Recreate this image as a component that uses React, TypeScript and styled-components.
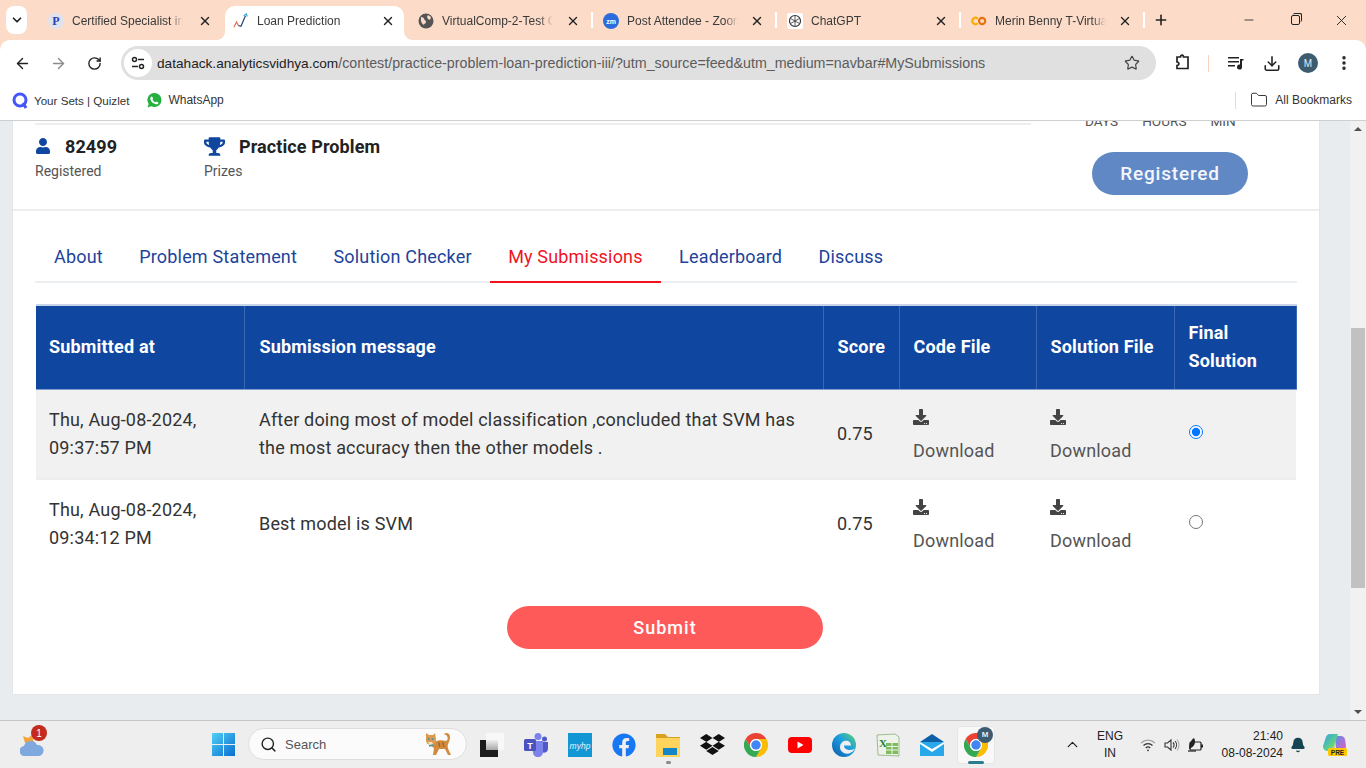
import React from "react";
import styled, { createGlobalStyle } from "styled-components";
import { ArrowLeft, ArrowRight, RotateCw, Star, MoreVertical, X, Plus, Minus, Folder, ChevronDown, ChevronUp, Search, Bell, Download } from "lucide-react";
import { FaUser, FaTrophy, FaDownload, FaFacebook, FaDropbox } from "react-icons/fa";

const Global = createGlobalStyle`
  html, body { margin: 0; padding: 0; width: 1366px; height: 768px; overflow: hidden; background: #fff; }
  * { box-sizing: border-box; }
`;
const ui = `"Liberation Sans", Arial, sans-serif`;
const rb = `Roboto, "Liberation Sans", sans-serif`;

const Shell = styled.div`width:1366px;height:768px;display:flex;flex-direction:column;overflow:hidden;font-family:${ui};background:#fcdcc8;`;
const TabStrip = styled.div`height:40px;background:#fcdcc8;display:flex;align-items:stretch;flex:none;`;
const TabMenu = styled.div`width:21px;height:28px;margin:6px 13px 0 6px;background:#fff;border-radius:8px;display:flex;align-items:center;justify-content:center;color:#222;`;
const Tab = styled.div<{ $active?: boolean; $sep?: boolean; $pad: number }>`
  position:relative;width:184px;flex:none;display:flex;align-items:center;font-size:12px;color:#333;padding:1px 12px 0 ${p => p.$pad}px;
  ${p => p.$active ? `background:#fff;border-radius:10px 10px 0 0;margin:6px 4px 0 1px;width:179px;padding-right:9px;padding-bottom:6px;
    &::before,&::after{content:"";position:absolute;bottom:0;width:8px;height:8px;}
    &::before{left:-8px;background:radial-gradient(circle at 0 0,transparent 7.5px,#fff 8px);}
    &::after{right:-8px;background:radial-gradient(circle at 100% 0,transparent 7.5px,#fff 8px);}` : ""}
  ${p => p.$sep ? `&::after{content:"";position:absolute;right:-1px;top:12px;width:2px;height:16px;background:#fff;}` : ""}
`;
const TabIcon = styled.span`width:16px;height:16px;flex:none;display:flex;align-items:center;justify-content:center;margin-left:1px;`;
const TabTitle = styled.span`flex:none;width:111px;margin-left:8px;white-space:nowrap;overflow:hidden;-webkit-mask-image:linear-gradient(90deg,#000 88%,transparent);mask-image:linear-gradient(90deg,#000 88%,transparent);color:#3a3a3a;`;
const TabClose = styled.span`margin-left:auto;display:flex;color:#222;`;
const NewTab = styled.span`display:flex;align-items:center;margin-left:9px;color:#222;`;
const WinCtl = styled.div`margin-left:auto;padding-right:2px;display:flex;align-items:center;color:#222;`;
const WinBtn = styled.span`width:46px;display:flex;justify-content:center;`;
const RestoreBox = styled.span`position:relative;width:9px;height:10px;border:1px solid #222;border-radius:2px;display:block;&::after{content:"";position:absolute;left:1px;top:-3px;width:8px;height:8px;border-top:1px solid #222;border-right:1px solid #222;border-radius:2px;}`;

const Toolbar = styled.div`height:44px;padding-top:2px;background:#fff;display:flex;align-items:center;flex:none;border-radius:10px 10px 0 0;`;
const NavIcon = styled.span<{ $w?: number; $dim?: boolean }>`width:${p => p.$w ?? 36}px;display:flex;justify-content:center;flex:none;color:${p => p.$dim ? "#8d8d8d" : "#222"};`;
const Omnibox = styled.div`width:1035px;height:34px;background:#e0e0e0;border-radius:17px;margin-left:5px;display:flex;align-items:center;padding:0 16px 0 3px;font-size:14.28px;color:#5c5c5c;`;
const SiteChip = styled.span`width:28px;height:28px;background:#fff;border-radius:50%;display:flex;align-items:center;justify-content:center;color:#222;margin-right:5px;flex:none;`;
const Host = styled.span`color:#222;font-size:13.65px;`;
const Url = styled.span`flex:1;white-space:nowrap;`;
const ToolSep = styled.span`width:1px;height:17px;background:#f8d4be;flex:none;`;
const Avatar = styled.span`width:20px;height:20px;border-radius:50%;background:#3e5c70;color:#e6edf2;font-size:10px;display:flex;align-items:center;justify-content:center;`;

const Bookmarks = styled.div`height:37px;background:#fff;border-bottom:1px solid #cfcfcf;flex:none;display:flex;align-items:center;font-size:11.6px;color:#333;padding:0 14px 4px 12px;`;
const Bookmark = styled.span`display:flex;align-items:center;gap:5px;margin-right:18px;&:nth-child(2){gap:6px;font-size:12px;}`;
const BmRight = styled.span`margin-left:auto;display:flex;align-items:center;gap:7px;font-size:12px;`;
const BmFolder = styled.span`display:flex;margin-left:7px;color:#333;`;

const PageArea = styled.div`flex:1;min-height:0;display:flex;background:#e9ecef;`;
const Main = styled.div`flex:1;padding:0 30px 0 12px;overflow:hidden;`;
const Card = styled.div`background:#fff;height:574px;border:1px solid #e4e6e8;border-top:0;overflow:hidden;`;
const Head = styled.div`height:90px;display:flex;border-bottom:2px solid #eee;padding:0 0 0 22px;`;
const HeadLeft = styled.div`width:996px;flex:none;padding-top:2px;`;
const Rule = styled.div`height:2px;background:#eee;`;
const Stats = styled.div`display:flex;margin-top:11px;`;
const Stat = styled.div`width:169px;font-family:${rb};`;
const StatTop = styled.div`display:flex;align-items:center;height:20px;color:#222;font-size:18px;font-weight:700;white-space:nowrap;letter-spacing:.1px;`;
const StatIcon = styled.span`color:#0f469f;display:flex;margin-right:14px;`;
const StatLabel = styled.div`font-size:14px;color:#555;margin-top:6px;line-height:18px;`;
const HeadRight = styled.div`flex:1;font-family:${rb};display:flex;flex-direction:column;align-items:flex-start;`;
const Counter = styled.div`display:flex;margin:-8px 0 0 54px;font-size:13.6px;color:#555;gap:24px;line-height:16px;height:16px;`;
const Registered = styled.div`width:156px;height:43px;margin:23px 0 0 61px;border-radius:22px;background:#6088c4;color:#f4f6fb;font-size:19px;font-weight:500;letter-spacing:.8px;display:flex;align-items:center;justify-content:center;`;

const Body = styled.div`padding:0 22px;font-family:${rb};`;
const Nav = styled.div`display:flex;gap:.4px;height:72px;padding:27px 0 0 1px;border-bottom:2px solid #eceff1;align-items:stretch;`;
const NavItem = styled.div<{ $active?: boolean }>`padding:0 18px;font-size:18px;letter-spacing:.18px;line-height:38px;height:45px;white-space:nowrap;color:${p => p.$active ? "#f0141e" : "#1d439b"};border-bottom:${p => p.$active ? "2px solid #f0141e" : "0"};`;
const Table = styled.table`margin:21px 0 0 1px;width:1260px;border-collapse:collapse;table-layout:fixed;font-size:18px;letter-spacing:.18px;color:#333;`;
const Th = styled.th<{ $w: number }>`width:${p => p.$w}px;height:84px;background:#0f469f;color:#fff;font-weight:700;text-align:left;padding:0 13px 0 14px;line-height:28px;border:1px solid #6d90c8;border-left-color:#3b68b3;border-right-color:#3b68b3;border-top:2px solid #c8d4e8;border-bottom:1px solid #7f9dcd;&:first-child{border-left:0;padding-left:13px;}&:nth-child(2){padding-left:15px;}`;
const Tr = styled.tr<{ $shade?: boolean }>`background:${p => p.$shade ? "#f1f1f1" : "#fff"};border-bottom:${p => p.$shade ? "2px solid #eceeef" : "0"};`;
const Td = styled.td<{ $h: number }>`height:${p => p.$h}px;padding:0 14px;line-height:28px;vertical-align:middle;&:first-child{padding-left:13px;}&:nth-child(2){padding-left:15px;}`;
const DlIcon = styled.div`color:#444;height:21px;margin:4px 0 9px;display:flex;align-items:center;`;
const DlText = styled.div`color:#555;`;
const Radio = styled.input`margin:0 0 3px 1px;width:14px;height:14px;display:block;`;
const SubmitRow = styled.div`display:flex;justify-content:center;margin-top:39px;padding-right:2px;`;
const Submit = styled.div`width:316px;height:43px;background:#ff5a5a;color:#fff;border-radius:22px;font-size:18px;font-weight:500;letter-spacing:1px;display:flex;align-items:center;justify-content:center;`;

const Scroll = styled.div`width:16px;flex:none;background:#f1f1f1;display:flex;flex-direction:column;align-items:center;`;
const Arrow = styled.span<{ $up?: boolean }>`width:0;height:0;border-left:4px solid transparent;border-right:4px solid transparent;${p => p.$up ? "border-bottom:4px solid #505050;margin-top:6px;" : "border-top:4px solid #505050;margin-top:auto;margin-bottom:6px;"}`;
const Thumb = styled.div`width:14px;height:260px;background:#c1c1c1;margin-top:197px;`;

const Taskbar = styled.div`height:48px;flex:none;background:#eeeeee;border-top:1px solid #c6c6c6;display:flex;align-items:center;font-size:12px;color:#222;`;
const Weather = styled.div`position:relative;width:212px;padding-left:20px;flex:none;display:flex;`;
const Badge = styled.span`position:absolute;left:31px;top:-8px;width:16px;height:16px;border-radius:50%;background:#c42b1c;color:#fff;font-size:10px;display:flex;align-items:center;justify-content:center;`;
const SearchBar = styled.div`width:219px;height:32px;margin:-1px 0 0 13px;background:#fbfbfb;border:1px solid #dedede;border-radius:16px;display:flex;align-items:center;padding:0 13px 0 11px;color:#555;font-size:13px;`;
const SearchText = styled.span`margin-left:8px;flex:1;`;
const Apps = styled.div`display:flex;margin-left:3px;`;
const AppSlot = styled.div`position:relative;width:44px;height:44px;display:flex;align-items:center;justify-content:center;`;
const ActiveBox = styled.div`position:absolute;left:3px;top:3px;width:38px;height:38px;background:#f8f8f8;border:1px solid #e6e6e6;border-radius:4px;`;
const ActiveMark = styled.div`position:absolute;left:14px;top:38px;width:16px;height:3px;border-radius:2px;background:#2a7d8e;`;
const OpenDot = styled.div`position:absolute;left:20px;top:38px;width:5px;height:3px;border-radius:2px;background:#8a8a8a;`;
const MiniBadge = styled.span`position:absolute;right:5px;top:4px;width:16px;height:16px;border-radius:50%;background:#3e5c70;color:#e6edf2;font-size:8px;font-weight:700;display:flex;align-items:center;justify-content:center;`;
const AppIcon = styled.span`position:relative;display:flex;`;
const Tray = styled.div`display:flex;align-items:center;margin-left:auto;padding-right:9px;`;
const Lang = styled.div`width:52px;text-align:center;line-height:17px;font-size:12px;`;
const Clock = styled.div`width:75px;text-align:right;line-height:17px;font-size:12px;`;
const TrayIcon = styled.span<{ $w: number }>`width:${p => p.$w}px;display:flex;justify-content:center;`;

const Chrome = () => (
  <svg width="24" height="24" viewBox="0 0 48 48">
    <path fill="#ea4335" d="M3.2 12A24 24 0 0 1 44.8 12H24A12 12 0 0 0 13.600 30z" />
    <path fill="#fbbc04" d="M44.8 12A24 24 0 0 1 24 48L34.400 30A12 12 0 0 0 24 12z" />
    <path fill="#34a853" d="M24 48A24 24 0 0 1 3.2 12L13.600 30A12 12 0 0 0 34.400 30z" />
    <circle cx="24" cy="24" r="12" fill="#fff" />
    <circle cx="24" cy="24" r="9.500" fill="#4285f4" />
  </svg>
);
const Cat = () => (
  <svg width="28" height="28" viewBox="0 0 28 28">
    <path fill="#d28b3e" d="M9 12c4-2 8-2 12-1 2-1 2-3 1-5-1-2-3-1-3-2 2-2 6-1 6 3 0 3-1 5-2 7-1 2 0 5 2 9l1 2h-3l-3-6h-6l-3 6H8l1-7-3-2z" />
    <path fill="#dd9a4e" d="M1 3l3 2h4l2-2 1 6c0 4-2 6-5 6S1 13 1 10z" />
    <path fill="#f5e3c4" d="M3 12h4l1 2-3 2z" />
    <path fill="#a9662a" d="M13 12l1 5 1.500 0-1-5zM17 12l1 5 1.500 0-1-5z" />
    <path stroke="#2f9fa8" strokeWidth="1.300" d="M4 16l4-1" />
    <circle cx="3.500" cy="9" r=".9" fill="#3b8f9f" /><circle cx="7.500" cy="9" r=".9" fill="#3b8f9f" />
  </svg>
);
const WinLogo = () => (
  <svg width="23" height="23" viewBox="0 0 24 24">
    <defs><linearGradient id="w" x1="0" y1="0" x2="1" y2="1"><stop offset="0" stopColor="#4fd0f5" /><stop offset="1" stopColor="#0a6ed1" /></linearGradient></defs>
    <path fill="url(#w)" d="M0 0h11.500v11.500H0zM12.500 0H24v11.500H12.500zM0 12.500h11.500V24H0zM12.500 12.500H24V24H12.500z" />
  </svg>
);

const tabs = [
  { t: "Certified Specialist in", pad: 7, i: <svg width="16" height="16"><circle cx="8" cy="8" r="8" fill="#dfe3ee" /><text x="8" y="12" textAnchor="middle" fontSize="12" fontWeight="700" fontFamily="Liberation Serif" fill="#2a3fb5">P</text></svg> },
  { t: "Loan Prediction", active: true, pad: 7, i: <svg width="18" height="18" viewBox="0 0 18 18" fill="none"><path d="M1 16l3-6 2 4" stroke="#e0654a" strokeWidth="1.200" /><path d="M6 14l3 1 5-12" stroke="#25406e" strokeWidth="1.300" /><path d="M12 3l3-2 1 3" stroke="#2f9fd8" strokeWidth="1.300" /></svg> },
  { t: "VirtualComp-2-Test G", pad: 9, sep: true, i: <svg width="16" height="16" viewBox="0 0 16 16"><circle cx="8" cy="8" r="7.500" fill="#555" /><path d="M3 4c2 0 3 1 3 2s2 1 2 3-2 1-2 3c-2-1-3-3-3-5zM10 2l3 2-1 3-2-1-1-2z" fill="#fcdcc8" /></svg> },
  { t: "Post Attendee - Zoom", pad: 10, sep: true, i: <svg width="16" height="16"><circle cx="8" cy="8" r="8" fill="#2d6bdc" /><text x="8" y="10.500" textAnchor="middle" fontSize="7" fontWeight="700" fontFamily="Liberation Sans" fill="#fff">zm</text></svg> },
  { t: "ChatGPT", pad: 10, sep: true, i: <svg width="16" height="16" viewBox="0 0 16 16" fill="none"><rect width="16" height="16" rx="2" fill="#fff" /><circle cx="8" cy="8" r="5.500" stroke="#333" strokeWidth="1.200" /><path d="M8 3v10M3.500 5.500l9 5M12.500 5.500l-9 5" stroke="#333" strokeWidth=".8" /></svg> },
  { t: "Merin Benny T-Virtual", pad: 10, sep: true, i: <svg width="18" height="12" viewBox="0 0 18 12" fill="none"><path d="M7.500 3.500a3.500 3.500 0 1 0 0 5" stroke="#f9ab00" strokeWidth="2.400" /><circle cx="12.500" cy="6" r="3.500" stroke="#e8710a" strokeWidth="2.400" /></svg> },
];

const rows = [
  { shade: true, h: 90, d: ["Thu, Aug-08-2024,", "09:37:57 PM"], m: "After doing most of model classification ,concluded that SVM has the most accuracy then the other models .", c: true },
  { shade: false, h: 88, d: ["Thu, Aug-08-2024,", "09:34:12 PM"], m: "Best model is SVM", c: false },
];

const Dl = () => (<><DlIcon><FaDownload size={16} /></DlIcon><DlText>Download</DlText></>);

export default function App() {
  return (
    <Shell>
      <Global />
      <TabStrip>
        <TabMenu><ChevronDown size={14} strokeWidth={3} /></TabMenu>
        {tabs.map(t => (
          <Tab key={t.t} $active={t.active} $sep={t.sep} $pad={t.pad}>
            <TabIcon>{t.i}</TabIcon>
            <TabTitle>{t.t}</TabTitle>
            <TabClose><X size={14} strokeWidth={2.4} /></TabClose>
          </Tab>
        ))}
        <NewTab><Plus size={16} strokeWidth={2.4} /></NewTab>
        <WinCtl>
          <WinBtn><Minus size={14} strokeWidth={1.400} /></WinBtn>
          <WinBtn><RestoreBox /></WinBtn>
          <WinBtn><X size={17} strokeWidth={1.300} /></WinBtn>
        </WinCtl>
      </TabStrip>
      <Toolbar>
        <NavIcon $w={44}><ArrowLeft size={17} strokeWidth={2} /></NavIcon>
        <NavIcon $w={28} $dim><ArrowRight size={17} strokeWidth={2} /></NavIcon>
        <NavIcon $w={44}><RotateCw size={15} strokeWidth={2.200} /></NavIcon>
        <Omnibox>
          <SiteChip>
            <svg width="14" height="14" viewBox="0 0 14 14" fill="none" stroke="#222" strokeWidth="1.500"><circle cx="3.500" cy="3.500" r="2" /><path d="M7 3.500h6" /><circle cx="10.500" cy="10.500" r="2" /><path d="M1 10.500h6" /></svg>
          </SiteChip>
          <Url><Host>datahack.analyticsvidhya.com</Host>/contest/practice-problem-loan-prediction-iii/?utm_source=feed&amp;utm_medium=navbar#MySubmissions</Url>
          <Star size={16} color="#444" strokeWidth={1.800} />
        </Omnibox>
        <NavIcon $w={52}>
          <svg width="18" height="18" viewBox="0 0 18 18" fill="none" stroke="#222" strokeWidth="1.700"><path d="M4 3h3.500c0-2.500 3-2.500 3 0H15v11.500H4v-3c2.500 0 2.500-3.500 0-3.500z" /></svg>
        </NavIcon>
        <ToolSep />
        <NavIcon $w={54}>
          <svg width="18" height="16" viewBox="0 0 18 16" fill="#222"><path d="M1 2h11v1.600H1zM1 6h11v1.600H1zM1 10h7v1.600H1z" /><path d="M13 4h3.500v1.600H15V12a2.500 2.500 0 1 1-2-2.400z" /></svg>
        </NavIcon>
        <NavIcon $w={18}><Download size={19} strokeWidth={2.100} /></NavIcon>
        <NavIcon $w={54}><Avatar>M</Avatar></NavIcon>
        <NavIcon $w={18}><MoreVertical size={18} strokeWidth={2.600} /></NavIcon>
      </Toolbar>
      <Bookmarks>
        <Bookmark>
          <svg width="17" height="17" viewBox="0 0 17 17" fill="none"><circle cx="8" cy="8" r="6" stroke="#4257f5" strokeWidth="3" /><path d="M11 11l3 5" stroke="#4257f5" strokeWidth="3" /></svg>
          Your Sets | Quizlet
        </Bookmark>
        <Bookmark>
          <svg width="15" height="15" viewBox="0 0 15 15"><path fill="#25b13f" d="M7.500 0a7 7 0 0 1 0 14 7 7 0 0 1-3.300-.8L.5 14.500l1.200-3.500A7 7 0 0 1 7.500 0z" /><path fill="#fff" d="M5 3.500l1.200 2-.7 1c.6 1.300 1.600 2.200 3 2.800l1-.8 2 1.200c-.3 1.300-1.300 1.800-2.500 1.600C6 10.800 3.800 8.600 3.300 6 3.100 4.800 3.700 3.800 5 3.500z" /></svg>
          WhatsApp
        </Bookmark>
        <BmRight>
          <ToolSep />
          <BmFolder><Folder size={18} strokeWidth={1.300} /></BmFolder>
          All Bookmarks
        </BmRight>
      </Bookmarks>
      <PageArea>
        <Main>
          <Card>
            <Head>
              <HeadLeft>
                <Rule />
                <Stats>
                  <Stat>
                    <StatTop><StatIcon><FaUser size={16} /></StatIcon>82499</StatTop>
                    <StatLabel>Registered</StatLabel>
                  </Stat>
                  <Stat>
                    <StatTop><StatIcon><FaTrophy size={21} /></StatIcon>Practice Problem</StatTop>
                    <StatLabel>Prizes</StatLabel>
                  </Stat>
                </Stats>
              </HeadLeft>
              <HeadRight>
                <Counter><span>DAYS</span><span>HOURS</span><span>MIN</span></Counter>
                <Registered>Registered</Registered>
              </HeadRight>
            </Head>
            <Body>
              <Nav>
                <NavItem>About</NavItem>
                <NavItem>Problem Statement</NavItem>
                <NavItem>Solution Checker</NavItem>
                <NavItem $active>My Submissions</NavItem>
                <NavItem>Leaderboard</NavItem>
                <NavItem>Discuss</NavItem>
              </Nav>
              <Table>
                <thead>
                  <tr>
                    <Th $w={208}>Submitted at</Th>
                    <Th $w={579}>Submission message</Th>
                    <Th $w={76}>Score</Th>
                    <Th $w={137}>Code File</Th>
                    <Th $w={138}>Solution File</Th>
                    <Th $w={122}>Final Solution</Th>
                  </tr>
                </thead>
                <tbody>
                  {rows.map(r => (
                    <Tr key={r.d[1]} $shade={r.shade}>
                      <Td $h={r.h}>{r.d[0]}<br />{r.d[1]}</Td>
                      <Td $h={r.h}>{r.m}</Td>
                      <Td $h={r.h}>0.75</Td>
                      <Td $h={r.h}><Dl /></Td>
                      <Td $h={r.h}><Dl /></Td>
                      <Td $h={r.h}><Radio type="radio" name="final" defaultChecked={r.c} /></Td>
                    </Tr>
                  ))}
                </tbody>
              </Table>
              <SubmitRow><Submit>Submit</Submit></SubmitRow>
            </Body>
          </Card>
        </Main>
        <Scroll>
          <Arrow $up />
          <Thumb />
          <Arrow />
        </Scroll>
      </PageArea>
      <Taskbar>
        <Weather>
          <svg width="25" height="23" viewBox="0 0 25 23"><path fill="#f2a33a" d="M3 3l5 2 4-3 2 8H5z" /><path fill="#7fa8de" d="M5 23a5 5 0 0 1-1-10 7 7 0 0 1 13-1 5.500 5.500 0 0 1 2 11z" /></svg>
          <Badge>1</Badge>
        </Weather>
        <WinLogo />
        <SearchBar>
          <Search size={17} color="#222" strokeWidth={2} />
          <SearchText>Search</SearchText>
          <Cat />
        </SearchBar>
        <Apps>
          <AppSlot>
            <svg width="24" height="24" viewBox="0 0 24 24">
              <defs><linearGradient id="wg" x1="0" y1="0" x2="0" y2="1"><stop offset="0" stopColor="#efefef" /><stop offset="1" stopColor="#a8a8a8" /></linearGradient></defs>
              <rect x="6" y="0" width="18" height="17" fill="#f8f8f8" /><rect x="0" y="7" width="18" height="17" fill="#1c1c1c" /><rect x="6" y="7" width="12" height="10" fill="url(#wg)" />
            </svg>
          </AppSlot>
          <AppSlot>
            <svg width="24" height="24" viewBox="0 0 24 24"><circle cx="14" cy="3.500" r="3.500" fill="#7b83eb" /><circle cx="20.500" cy="6" r="2.500" fill="#5059c9" /><path fill="#5059c9" d="M17 9h7v7a4 4 0 0 1-5 3.500z" /><path fill="#7b83eb" d="M7 8h12v11a5 5 0 0 1-10 .5z" /><rect x="0" y="6" width="12" height="12" rx="1.500" fill="#4b53bc" /><text x="6" y="15.500" textAnchor="middle" fontSize="9" fontWeight="700" fontFamily="Liberation Sans" fill="#fff">T</text></svg>
          </AppSlot>
          <AppSlot>
            <svg width="24" height="24" viewBox="0 0 24 24"><rect width="24" height="24" fill="#1296d4" /><text x="12" y="15.500" textAnchor="middle" fontSize="8.500" fontStyle="italic" fontFamily="Liberation Sans" fill="#e4f4fc">myhp</text></svg>
          </AppSlot>
          <AppSlot><FaFacebook size={24} color="#1877f2" /></AppSlot>
          <AppSlot>
            <svg width="24" height="24" viewBox="0 0 24 24"><path fill="#d9a21e" d="M0 1h9l3 3h12v5H0z" /><rect y="5" width="24" height="19" fill="#ffd45c" /><rect x="7" y="15" width="14" height="7" fill="#1686c8" /></svg>
            <OpenDot />
          </AppSlot>
          <AppSlot><FaDropbox size={25} color="#111" /></AppSlot>
          <AppSlot><Chrome /></AppSlot>
          <AppSlot>
            <svg width="24" height="16" viewBox="0 0 24 16"><rect width="24" height="16" rx="4" fill="#f00" /><path fill="#fff" d="M9.500 4.500v7l6-3.500z" /></svg>
          </AppSlot>
          <AppSlot>
            <svg width="24" height="24" viewBox="0 0 24 24">
              <defs>
                <linearGradient id="e" x1="0" y1="1" x2="1" y2="0"><stop offset="0" stopColor="#0c59a4" /><stop offset=".55" stopColor="#1b9de2" /><stop offset="1" stopColor="#5fd36a" /></linearGradient>
              </defs>
              <circle cx="12" cy="12" r="12" fill="url(#e)" />
              <path fill="#eeeeee" d="M12 8c4-1 7 1 7 4.500h-7c0 3 3 4.500 6 4.500 2 0 4-.8 5-1.500-1 2-3 4-6 5-2.500.6-5 0-6.500-1.500C7 17 7 10 12 8z" />
            </svg>
          </AppSlot>
          <AppSlot>
            <svg width="24" height="24" viewBox="0 0 24 24"><path fill="#eef3ea" stroke="#9cbc8e" d="M1 2l18-1 4 3v19l-21-1z" /><path fill="#7dbb5c" d="M10 10h12v11H10z" /><path stroke="#eef3ea" d="M10 13.500h12M10 17h12M16 10v11" /><text x="7" y="14" textAnchor="middle" fontSize="11" fontWeight="700" fontFamily="Liberation Serif" fill="#1f7f3f">X</text></svg>
          </AppSlot>
          <AppSlot>
            <svg width="24" height="22" viewBox="0 0 24 22"><path fill="#0f5fa8" d="M12 0l12 8v3H0V8z" /><rect y="8" width="24" height="14" fill="#28a8ea" /><path fill="#fff" d="M0 8l12 7 12-7v2l-12 8L0 10z" /></svg>
          </AppSlot>
          <AppSlot>
            <ActiveBox />
            <AppIcon><Chrome /></AppIcon>
            <MiniBadge>M</MiniBadge>
            <ActiveMark />
          </AppSlot>
        </Apps>
        <Tray>
          <TrayIcon $w={24}><ChevronUp size={17} strokeWidth={1.800} /></TrayIcon>
          <Lang>ENG<br />IN</Lang>
          <TrayIcon $w={24}>
            <svg width="16" height="14" viewBox="0 0 16 14" fill="none" stroke="#333" strokeWidth="1.200"><path d="M1 5a10 10 0 0 1 14 0" opacity=".4" /><path d="M3.500 7.500a6.500 6.500 0 0 1 9 0" /><path d="M5.800 10a3.200 3.200 0 0 1 4.400 0" /><circle cx="8" cy="12.300" r=".9" fill="#333" stroke="none" /></svg>
          </TrayIcon>
          <TrayIcon $w={24}>
            <svg width="16" height="14" viewBox="0 0 16 14" fill="none" stroke="#333" strokeWidth="1.100"><path d="M1 5h2.500L7 2v10L3.500 9H1z" /><path d="M9 4.500a3.500 3.500 0 0 1 0 5M11 3a6 6 0 0 1 0 8" /><path d="M13 1.500a8.500 8.500 0 0 1 0 11" opacity=".35" /></svg>
          </TrayIcon>
          <TrayIcon $w={24}>
            <svg width="18" height="16" viewBox="0 0 18 16" fill="none" stroke="#222" strokeWidth="1.200"><rect x="3" y="5" width="11" height="8" rx="1" /><rect x="14" y="7.500" width="2" height="3" fill="#222" stroke="none" /><path d="M2 12c0-5 2-9 5-11 2 3 1 8-3 10z" fill="#222" stroke="none" /><path d="M1 14h8" /></svg>
          </TrayIcon>
          <Clock>21:40<br />08-08-2024</Clock>
          <TrayIcon $w={30}><Bell size={16} fill="#144552" color="#144552" /></TrayIcon>
          <TrayIcon $w={44}>
            <svg width="24" height="24" viewBox="0 0 24 24">
              <defs>
                <linearGradient id="c1" x1="0" y1="0" x2="1" y2="1"><stop offset="0" stopColor="#2f9fe8" /><stop offset=".6" stopColor="#5fcf8a" /><stop offset="1" stopColor="#f2d14a" /></linearGradient>
                <linearGradient id="c2" x1="0" y1="0" x2="1" y2="1"><stop offset="0" stopColor="#5b8fe8" /><stop offset="1" stopColor="#e85cc4" /></linearGradient>
              </defs>
              <path fill="url(#c2)" d="M12 3h6c2 0 3 1 4 3l1 7c0 3-2 5-5 5h-5z" />
              <path fill="url(#c1)" d="M7 1h8l-3 9-1 8H5c-3 0-5-2-5-5l3-9c1-2 2-3 4-3z" />
              <rect x="5" y="15" width="19" height="8" rx="1.500" fill="#ffc800" />
              <text x="14.500" y="21.500" textAnchor="middle" fontSize="6.500" fontWeight="700" fontFamily="Liberation Sans" fill="#222">PRE</text>
            </svg>
          </TrayIcon>
        </Tray>
      </Taskbar>
    </Shell>
  );
}
